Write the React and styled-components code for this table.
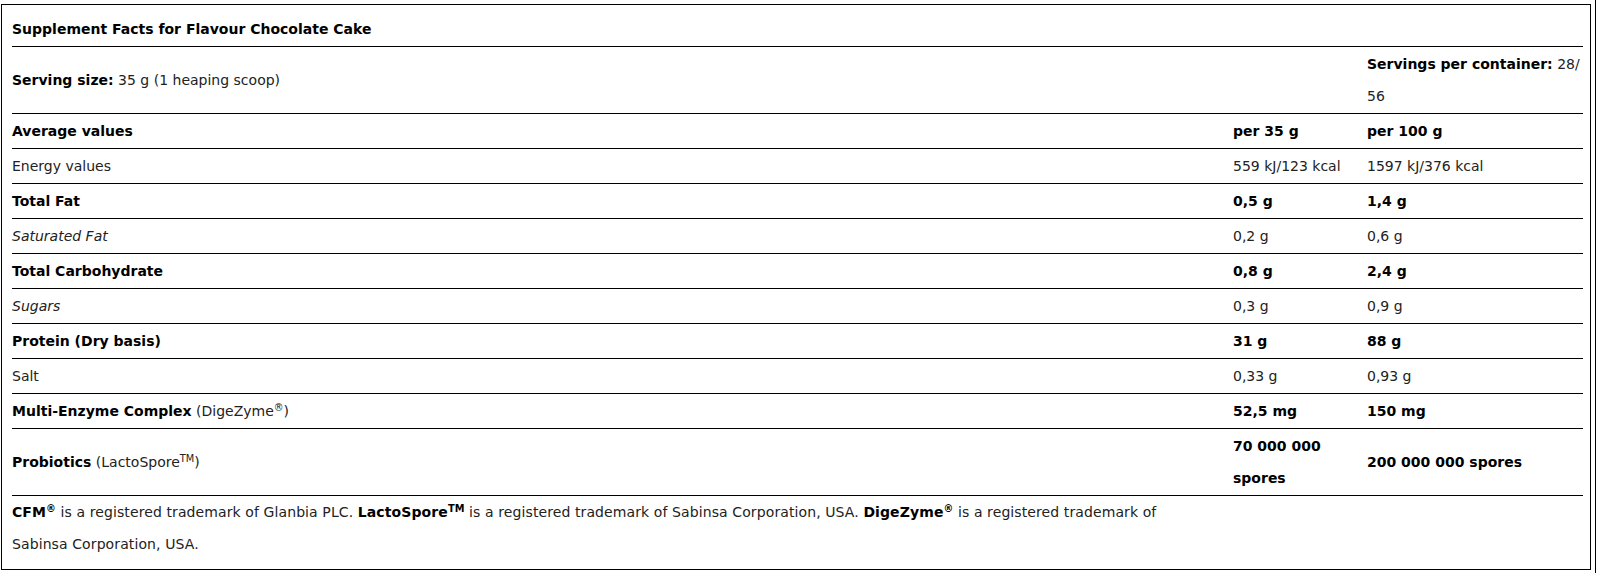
import React from "react";
import styled, { createGlobalStyle } from "styled-components";

const GlobalStyle = createGlobalStyle`
  body {
    margin: 0;
    background: #fff;
    font-family: "DejaVu Sans", "Noto Sans", sans-serif;
    font-size: 14px;
    color: #222;
  }
`;

const Page = styled.div`
  width: 1596px;
  min-height: 573px;
  box-sizing: border-box;
  border-right: 1px solid #000;
  padding: 4px 0 0 1px;
`;

const FactsBox = styled.section`
  width: 1590px;
  height: 566px;
  box-sizing: border-box;
  border: 1px solid #000;
  padding: 0 7px 0 10px;
`;

const Title = styled.h2`
  margin: 0;
  padding: 8px 0 1px;
  font-size: 14px;
  line-height: 32px;
  font-weight: 700;
  color: #000;
  border-bottom: 1px solid #000;
`;

const Table = styled.table`
  width: 100%;
  border-collapse: collapse;
  table-layout: fixed;
`;

const Row = styled.tr`
  border-bottom: 1px solid #000;
`;

const Cell = styled.td`
  padding: 1px 0;
  line-height: 32px;
  vertical-align: middle;
  text-align: left;
  font-weight: ${(p) => (p.$bold ? 700 : 400)};
  font-style: ${(p) => (p.$italic ? "italic" : "normal")};
  color: ${(p) => (p.$bold ? "#000" : "#222")};
`;

const Strong = styled.strong`
  font-weight: 700;
  color: #000;
`;

const Sup = styled.sup`
  font-size: 0.7em;
  line-height: 1;
  vertical-align: 0.55em;
`;

const Footer = styled.p`
  margin: 0;
  width: 1150px;
  line-height: 32px;
  letter-spacing: 0.1px;
  color: #222;
`;

const rows = [
  { label: "Average values", a: "per 35 g", b: "per 100 g", bold: true },
  { label: "Energy values", a: "559 kJ/123 kcal", b: "1597 kJ/376 kcal" },
  { label: "Total Fat", a: "0,5 g", b: "1,4 g", bold: true },
  { label: "Saturated Fat", a: "0,2 g", b: "0,6 g", italic: true },
  { label: "Total Carbohydrate", a: "0,8 g", b: "2,4 g", bold: true },
  { label: "Sugars", a: "0,3 g", b: "0,9 g", italic: true },
  { label: "Protein (Dry basis)", a: "31 g", b: "88 g", bold: true },
  { label: "Salt", a: "0,33 g", b: "0,93 g" },
];

export default function App() {
  return (
    <>
      <GlobalStyle />
      <Page>
        <FactsBox>
          <Title>Supplement Facts for Flavour Chocolate Cake</Title>
          <Table>
            <colgroup>
              <col style={{ width: "1221px" }} />
              <col style={{ width: "134px" }} />
              <col />
            </colgroup>
            <tbody>
              <Row>
                <Cell>
                  <Strong>Serving size:</Strong> 35 g (1 heaping scoop)
                </Cell>
                <Cell />
                <Cell>
                  <Strong>Servings per container:</Strong> 28/<wbr />56
                </Cell>
              </Row>
              {rows.map((r) => (
                <Row key={r.label}>
                  <Cell $bold={r.bold} $italic={r.italic}>
                    {r.label}
                  </Cell>
                  <Cell $bold={r.bold}>{r.a}</Cell>
                  <Cell $bold={r.bold}>{r.b}</Cell>
                </Row>
              ))}
              <Row>
                <Cell>
                  <Strong>Multi-Enzyme Complex</Strong> (DigeZyme<Sup>®</Sup>)
                </Cell>
                <Cell $bold>52,5 mg</Cell>
                <Cell $bold>150 mg</Cell>
              </Row>
              <Row>
                <Cell>
                  <Strong>Probiotics</Strong> (LactoSpore<Sup>TM</Sup>)
                </Cell>
                <Cell $bold>70 000 000 spores</Cell>
                <Cell $bold>200 000 000 spores</Cell>
              </Row>
            </tbody>
          </Table>
          <Footer>
            <Strong>
              CFM<Sup>®</Sup>
            </Strong>{" "}
            is a registered trademark of Glanbia PLC.{" "}
            <Strong>
              LactoSpore<Sup>TM</Sup>
            </Strong>{" "}
            is a registered trademark of Sabinsa Corporation, USA.{" "}
            <Strong>
              DigeZyme<Sup>®</Sup>
            </Strong>{" "}
            is a registered trademark of Sabinsa Corporation, USA.
          </Footer>
        </FactsBox>
      </Page>
    </>
  );
}
